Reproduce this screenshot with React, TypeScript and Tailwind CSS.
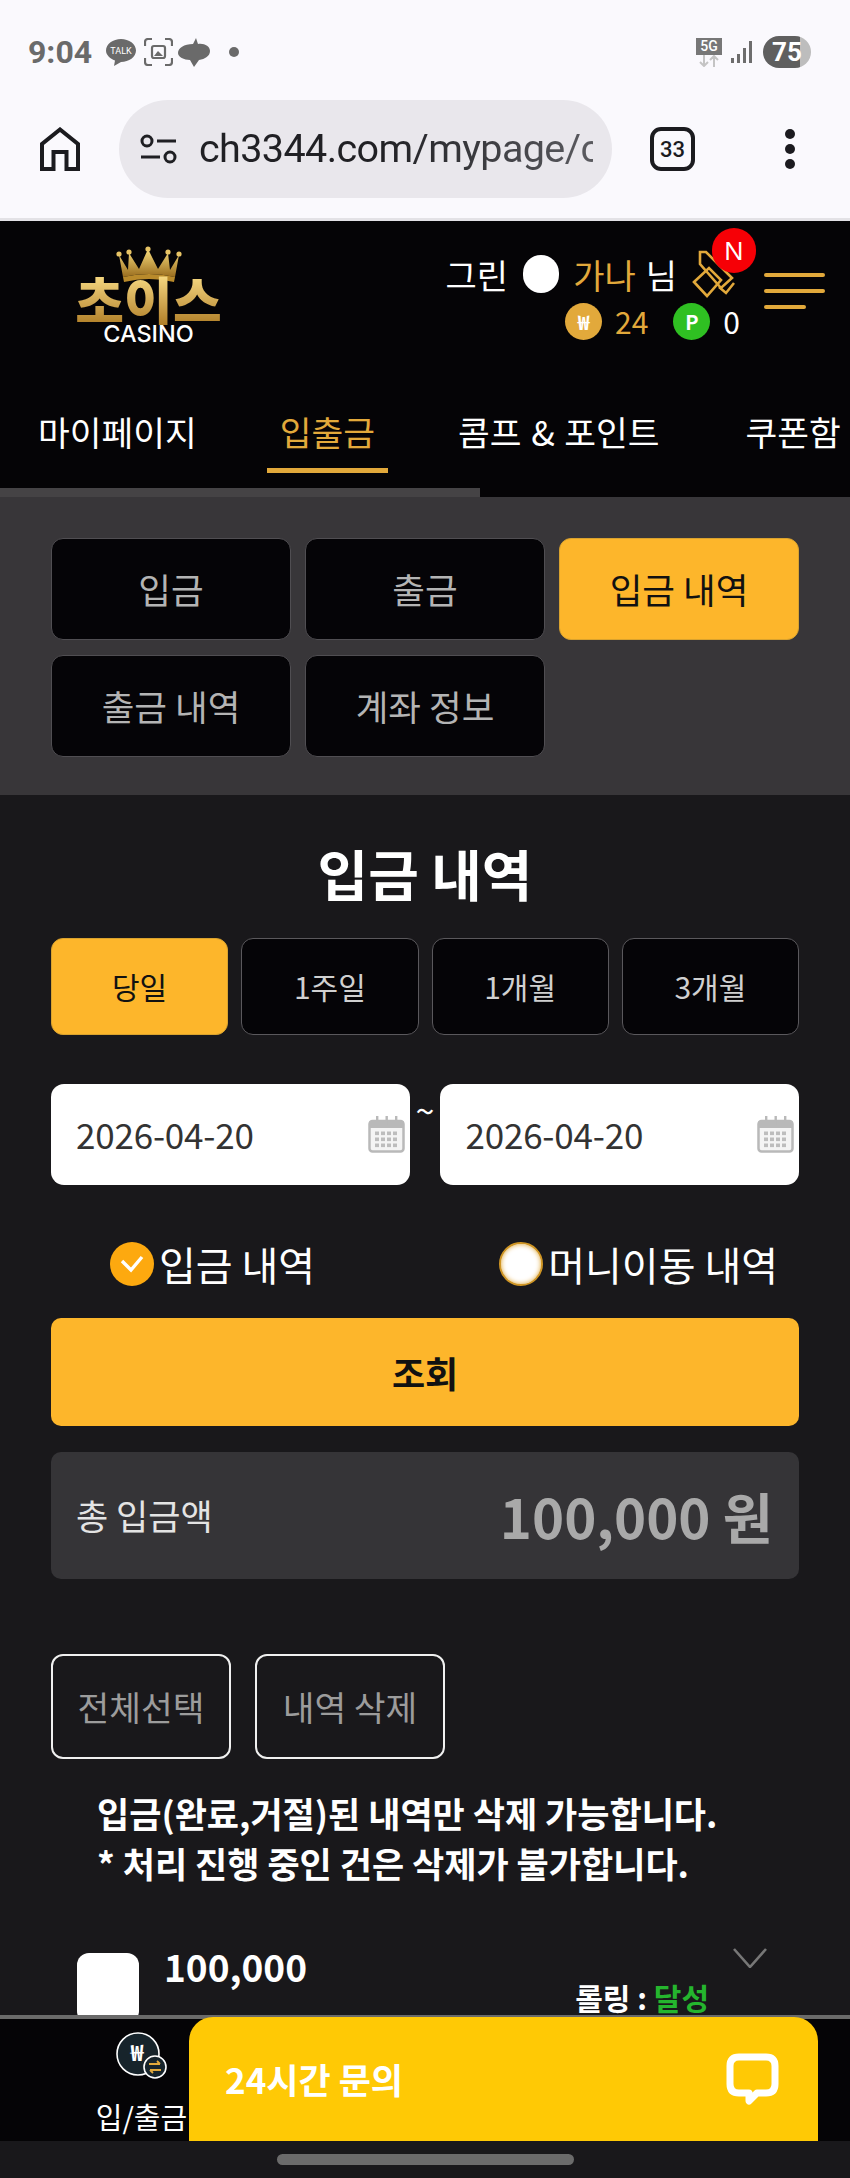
import React from "react";

const Tab = ({ label, active }: { label: string; active?: boolean }) => (
  <div
    className={
      active
        ? "h-[102px] rounded-[12px] bg-[#fdb62b] border border-[#d9a22e] text-[#111] text-[35.5px] flex items-center justify-center"
        : "h-[102px] rounded-[12px] bg-[#050407] border border-[#504e52] text-[#b4b4b4] text-[35.5px] flex items-center justify-center"
    }
  >
    {label}
  </div>
);

const Period = ({ label, active }: { label: string; active?: boolean }) => (
  <div
    className={
      active
        ? "h-[97px] rounded-[12px] bg-[#fdb62b] border border-[#d9a22e] text-[#111] text-[30px] flex items-center justify-center"
        : "h-[97px] rounded-[12px] bg-[#050407] border border-[#5a585c] text-[#d0d0d0] text-[30px] flex items-center justify-center"
    }
  >
    {label}
  </div>
);

const Calendar = () => (
  <svg width="37" height="37" viewBox="0 0 37 37" className="shrink-0">
    <rect x="1.5" y="5" width="34" height="30.5" rx="3" fill="#f4f4f4" stroke="#b9b9b9" strokeWidth="2.5" />
    <rect x="1.5" y="5" width="34" height="7" fill="#b9b9b9" />
    {[9, 18.5, 28].map((x) => (
      <rect key={x} x={x - 1} y="0" width="2.4" height="9" fill="#b9b9b9" />
    ))}
    {[15.5, 21.5, 27.5].map((y) =>
      [7, 13, 19, 25].map((x) => <rect key={`${x}-${y}`} x={x} y={y} width="4" height="3.6" fill="#bdbdbd" />)
    )}
  </svg>
);

const DateBox = () => (
  <div className="w-[359px] h-[101px] rounded-[13px] bg-white flex items-center pl-[25px] pr-[5px] justify-between">
    <span className="text-[#333] text-[35px] tracking-[-0.2px]">2026-04-20</span>
    <Calendar />
  </div>
);

const Logo = () => (
  <div className="ml-[77px] mt-[25px] w-[143px] flex flex-col items-center">
    <svg width="68" height="36" viewBox="0 0 68 36">
      <defs>
        <linearGradient id="crown" x1="0" y1="0" x2="0" y2="1">
          <stop offset="0" stopColor="#f8dc7c" />
          <stop offset="1" stopColor="#9a6d1e" />
        </linearGradient>
      </defs>
      <path d="M4 9 L13 24 L14 7 L24 23 L33 3 L43 23 L53 7 L55 24 L64 9 L60 31 Q34 25 8 31 Z" fill="url(#crown)" />
      <path d="M8 31 Q34 25 60 31 L59 36 Q34 30 9 36 Z" fill="#b98a2b" />
      {[[4, 8], [14, 6], [33, 3], [53, 6], [64, 8]].map(([x, y]) => (
        <circle key={x} cx={x} cy={y} r="2.6" fill="#e8c465" />
      ))}
    </svg>
    <div className="-mt-[8px] h-[51px] leading-[51px] text-[53px] font-black whitespace-nowrap bg-linear-to-b from-[#f9dc84] to-[#b07f26] bg-clip-text text-transparent">
      초이스
    </div>
    <div className="leading-[18px] text-[23.5px] font-medium text-white font-['Inter',sans-serif]">CASINO</div>
  </div>
);

export default function App() {
  return (
    <div className="w-[850px] h-[2178px] overflow-hidden flex flex-col bg-[#19181b] font-['Noto_Sans_CJK_KR','Noto_Sans',sans-serif]">
      {/* phone chrome */}
      <div className="h-[221px] shrink-0 bg-[#faf9fd] border-b-[3px] border-[#e3e2e6]">
        <div className="h-[100px] pt-[36px] pl-[28px] pr-[39px] flex items-start">
          <div className="h-[32px] flex items-center w-full">
            <span className="text-[32px] font-bold text-[#6a6a6a] font-['Roboto',sans-serif] leading-none">9:04</span>
            <svg width="30" height="28" viewBox="0 0 30 28" className="ml-[14px]">
              <path d="M15 1 C23 1 30 6 30 12.5 C30 19 23 24 15 24 L8 28 L9 22.5 C4 20.5 0 17 0 12.5 C0 6 7 1 15 1Z" fill="#6a6a6a" />
              <text x="15" y="16" textAnchor="middle" fontSize="9" fill="#fff" fontFamily="Roboto">TALK</text>
            </svg>
            <svg width="29" height="28" viewBox="0 0 29 28" className="ml-[8px]" fill="none" stroke="#6a6a6a" strokeWidth="2.2">
              <path d="M1 8 V4 Q1 1 4 1 H8 M21 1 H25 Q28 1 28 4 V8 M28 20 V24 Q28 27 25 27 H21 M8 27 H4 Q1 27 1 24 V20" />
              <rect x="8" y="8" width="13" height="12" rx="2" />
              <path d="M10 18 L14 13 L19 18Z" fill="#6a6a6a" stroke="none" />
            </svg>
            <svg width="32" height="29" viewBox="0 0 32 29" className="ml-[5px]">
              <path d="M18 0 L15 6 C6 6 0 10 0 15 C0 19 6 22 12 22 L16 29 L21 22 C27 21 32 18 32 13 C32 8 26 5 20 6 Z" fill="#6a6a6a" />
            </svg>
            <span className="ml-[19px] w-[10px] h-[10px] rounded-full bg-[#6a6a6a]" />
            <div className="ml-auto flex items-center">
              <div className="w-[26px] flex flex-col items-center">
                <div className="w-[26px] h-[17px] bg-[#777] text-white text-[14px] leading-[17px] text-center font-medium font-['Roboto',sans-serif]">5G</div>
                <svg width="24" height="12" viewBox="0 0 24 12" fill="none" stroke="#c4c4c4" strokeWidth="2">
                  <path d="M7 0 V10 M3 7 L7 11 L11 7 M17 12 V2 M13 5 L17 1 L21 5" />
                </svg>
              </div>
              <svg width="22" height="23" viewBox="0 0 22 23" className="ml-[9px]" fill="#6d6d6d">
                <rect x="0" y="17" width="3" height="5" />
                <rect x="6" y="13" width="3" height="9" />
                <rect x="12" y="7" width="3" height="15" />
                <rect x="18" y="0" width="3" height="22" />
              </svg>
              <div className="ml-[10px] w-[48px] h-[32px] rounded-full overflow-hidden bg-linear-to-r from-[#5f5f5f] from-[78%] to-[#bdbdbd] to-[78%] text-white text-[26px] font-bold leading-[32px] text-center font-['Roboto',sans-serif]">
                75
              </div>
            </div>
          </div>
        </div>
        <div className="h-[98px] flex items-center pl-[40px]">
          <svg width="40" height="44" viewBox="0 0 40 44" fill="none" stroke="#1b1b1f" strokeWidth="4">
            <path d="M2 42 V17 L20 2.5 L38 17 V42 H26.5 V25 H13.5 V42 Z" />
          </svg>
          <div className="ml-[39px] w-[493px] h-[98px] rounded-full bg-[#e9e7ec] flex items-center pl-[21px] pr-[19px]">
            <svg width="37" height="30" viewBox="0 0 37 30" fill="none" stroke="#1f1f23" strokeWidth="3" className="shrink-0">
              <circle cx="7" cy="7" r="5" />
              <path d="M17 7 H36 M1 23 H20" />
              <circle cx="30" cy="23" r="5" />
            </svg>
            <div className="ml-[22px] flex-1 min-w-0 overflow-hidden whitespace-nowrap text-[39.5px] tracking-[-0.6px] font-['Roboto',sans-serif] bg-linear-to-r from-[#202024] from-[45%] to-[#5b5b60] bg-clip-text text-transparent">
              ch3344.com/mypage/c
            </div>
          </div>
          <div className="ml-[38px] w-[45px] h-[44px] rounded-[11px] border-[4px] border-[#1b1b1f] flex items-center justify-center text-[22px] font-medium text-[#1b1b1f] font-['Roboto',sans-serif]">
            33
          </div>
          <div className="ml-[90px] flex flex-col gap-[5px]">
            <span className="w-[10px] h-[10px] rounded-full bg-[#1b1b1f]" />
            <span className="w-[10px] h-[10px] rounded-full bg-[#1b1b1f]" />
            <span className="w-[10px] h-[10px] rounded-full bg-[#1b1b1f]" />
          </div>
        </div>
      </div>

      {/* site header */}
      <div className="h-[267px] shrink-0 bg-[#050406] flex flex-col">
        <div className="h-[172px] flex">
          <Logo />
          <div className="ml-auto mt-[34px] flex flex-col items-end">
            <div className="h-[38px] flex items-center text-[34px] text-white whitespace-nowrap">
              <span>그린</span>
              <span className="ml-[15px] w-[36px] h-[38px] rounded-full bg-white" />
              <span className="ml-[14px] text-[#e2a93b]">가나</span>
              <span className="ml-[10px]">님</span>
              <div className="ml-[15px] mr-[3px] w-[43px] h-[38px] relative">
                <svg width="43" height="48" viewBox="0 0 43 48" fill="none" stroke="#e2a93b" strokeWidth="2.6" className="absolute left-0 -top-[5px]">
                  <path d="M8 2 H14 L40 28 L29 38 L8 14 Z" />
                  <path d="M2 32 L17 18 L29 30 L15 46 Z" />
                  <path d="M27 37 L34 43 L42 33" />
                </svg>
                <span className="absolute left-[20px] -top-[27px] w-[44px] h-[45px] rounded-full bg-[#f60006] text-white text-[26px] leading-[45px] text-center font-['Noto_Sans',sans-serif]">
                  N
                </span>
              </div>
            </div>
            <div className="mt-[10px] h-[37px] flex items-center text-[30px] -mr-[2px]">
              <span className="w-[37px] h-[37px] rounded-full bg-[#e2a93b] text-white text-[20px] font-bold leading-[37px] text-center">₩</span>
              <span className="ml-[13px] text-[#e2a93b]">24</span>
              <span className="ml-[25px] w-[37px] h-[37px] rounded-full bg-[#2fc022] text-white text-[20px] font-bold leading-[37px] text-center">P</span>
              <span className="ml-[13px] text-white">0</span>
            </div>
          </div>
          <div className="ml-[26px] mr-[25px] mt-[52px] w-[61px] flex flex-col gap-[12px]">
            <span className="h-[4px] w-full bg-[#e2a93b] rounded-full" />
            <span className="h-[4px] w-full bg-[#e2a93b] rounded-full" />
            <span className="h-[4px] w-[42px] bg-[#e2a93b] rounded-full" />
          </div>
        </div>
        <div className="h-[95px] flex pl-[25px] gap-[57px] overflow-hidden whitespace-nowrap text-[34.5px] text-white">
          <div className="px-[13px] pt-[12px] leading-[52px] shrink-0">마이페이지</div>
          <div className="px-[13px] pt-[12px] leading-[52px] text-[#e2a93b] h-[80px] border-b-[5px] border-[#e2a93b] shrink-0">입출금</div>
          <div className="px-[13px] pt-[12px] leading-[52px] shrink-0 [word-spacing:2px]">콤프 &amp; 포인트</div>
          <div className="ml-[3px] px-[13px] pt-[12px] leading-[52px] shrink-0">쿠폰함</div>
        </div>
      </div>

      {/* scroll strip */}
      <div className="h-[9px] shrink-0 flex bg-[#050406]">
        <div className="w-[480px] bg-[#454345]" />
      </div>

      {/* tabs */}
      <div className="shrink-0 bg-[#383639] px-[51px] pt-[41px] grid grid-cols-3 content-start gap-x-[14px] gap-y-[15px] h-[298px]">
        <Tab label="입금" />
        <Tab label="출금" />
        <Tab label="입금 내역" active />
        <Tab label="출금 내역" />
        <Tab label="계좌 정보" />
      </div>

      {/* content */}
      <div className="flex-1 min-h-0 overflow-hidden bg-[#19181b] px-[51px] pt-[47px]">
        <h1 className="text-center text-[55px] font-bold leading-[60px] text-white">입금 내역</h1>
        <div className="mt-[36px] grid grid-cols-4 gap-x-[13px]">
          <Period label="당일" active />
          <Period label="1주일" />
          <Period label="1개월" />
          <Period label="3개월" />
        </div>
        <div className="mt-[49px] flex items-start">
          <DateBox />
          <span className="w-[31px] text-center text-white text-[34px] leading-[40px] mt-[6px]">~</span>
          <DateBox />
        </div>
        <div className="mt-[57px] h-[44px] flex justify-between pl-[59px] pr-[21px] text-white text-[40px]">
          <div className="flex items-center gap-[5px]">
            <span className="w-[44px] h-[44px] rounded-full bg-[#fda90f] flex items-center justify-center">
              <svg width="24" height="18" viewBox="0 0 24 18" fill="none" stroke="#fff" strokeWidth="3.4">
                <path d="M2 6 L11 15 L22 2" />
              </svg>
            </span>
            <span className="leading-[44px]">입금 내역</span>
          </div>
          <div className="flex items-center gap-[5px]">
            <span className="w-[44px] h-[44px] rounded-full bg-white border-2 border-[#cf9524] shadow-[inset_0_0_5px_#e0a83a]" />
            <span className="leading-[44px]">머니이동 내역</span>
          </div>
        </div>
        <div className="mt-[32px] h-[108px] rounded-[10px] bg-[#fdb62b] flex items-center justify-center text-[#111] text-[36px] font-bold">
          조회
        </div>
        <div className="mt-[26px] h-[127px] rounded-[10px] bg-[#353437] flex items-center justify-between pl-[25px] pr-[26px]">
          <span className="text-[#e4e4e4] text-[35px]">총 입금액</span>
          <span className="text-[#a9a9a9] text-[54.5px] font-bold">100,000 원</span>
        </div>
        <div className="mt-[75px] flex gap-[24px]">
          <div className="w-[180px] h-[105px] rounded-[12px] border-2 border-[#f0f0f0] flex items-center justify-center text-[#9c9c9c] text-[34.5px]">전체선택</div>
          <div className="w-[190px] h-[105px] rounded-[12px] border-2 border-[#f0f0f0] flex items-center justify-center text-[#9c9c9c] text-[34.5px]">내역 삭제</div>
        </div>
        <div className="mt-[29px] pl-[46px] text-white text-[35px] font-bold leading-[50px] whitespace-nowrap">
          <p>입금(완료,거절)된 내역만 삭제 가능합니다.</p>
          <p>* 처리 진행 중인 건은 삭제가 불가합니다.</p>
        </div>
        <div className="mt-[65px] pl-[26px] pr-[32px] flex items-start">
          <span className="w-[62px] h-[70px] rounded-[12px] bg-white shrink-0" />
          <span className="ml-[25px] -mt-[2px] text-[37px] font-bold text-white leading-[30px]">100,000</span>
          <span className="ml-auto mt-[30px] text-[30px] font-bold text-white leading-[28px] whitespace-nowrap">
            롤링 : <span className="text-[#25b52e]">달성</span>
          </span>
          <svg width="34" height="20" viewBox="0 0 34 20" fill="none" stroke="#777" strokeWidth="2.6" className="ml-[24px] -mt-[5px] shrink-0">
            <path d="M1 1 L17 19 L33 1" />
          </svg>
        </div>
      </div>

      {/* bottom nav */}
      <div className="relative h-[126px] shrink-0 bg-[#050406] border-t-[4px] border-[#6a6a6a]">
        <div className="absolute left-[96px] top-[13px] w-[91px] flex flex-col items-center">
          <svg width="51" height="47" viewBox="0 0 51 47">
            <circle cx="22" cy="22" r="21" fill="#17242b" stroke="#fff" strokeWidth="1.6" />
            <text x="21" y="29" textAnchor="middle" fontSize="22" fontWeight="700" fill="#fff">₩</text>
            <circle cx="39" cy="35" r="11" fill="#17242b" stroke="#fff" strokeWidth="1.6" />
            <path d="M33 32 H44 M41 29 L44 32 M45 38 H34 M37 41 L34 38" stroke="#e2a93b" strokeWidth="1.8" fill="none" />
          </svg>
          <span className="mt-[19px] text-[29px] leading-[36px] text-white whitespace-nowrap">입/출금</span>
        </div>
        <div className="absolute left-[189px] right-[32px] -top-[2px] h-[124px] rounded-t-[24px] bg-[#ffc905] flex items-center justify-between pl-[36px] pr-[39px]">
          <span className="text-white text-[35px] font-bold">24시간 문의</span>
          <svg width="53" height="53" viewBox="0 0 53 53" fill="none" stroke="#fff" strokeWidth="7" strokeLinejoin="round">
            <path d="M13 4 H40 Q49 4 49 13 V31 Q49 40 40 40 H31 L23 48 V40 H13 Q4 40 4 31 V13 Q4 4 13 4Z" />
          </svg>
        </div>
      </div>

      {/* system bar */}
      <div className="h-[37px] shrink-0 bg-[#19181b] flex items-center justify-center">
        <span className="w-[297px] h-[11px] rounded-full bg-[#6b6b6b]" />
      </div>
    </div>
  );
}
